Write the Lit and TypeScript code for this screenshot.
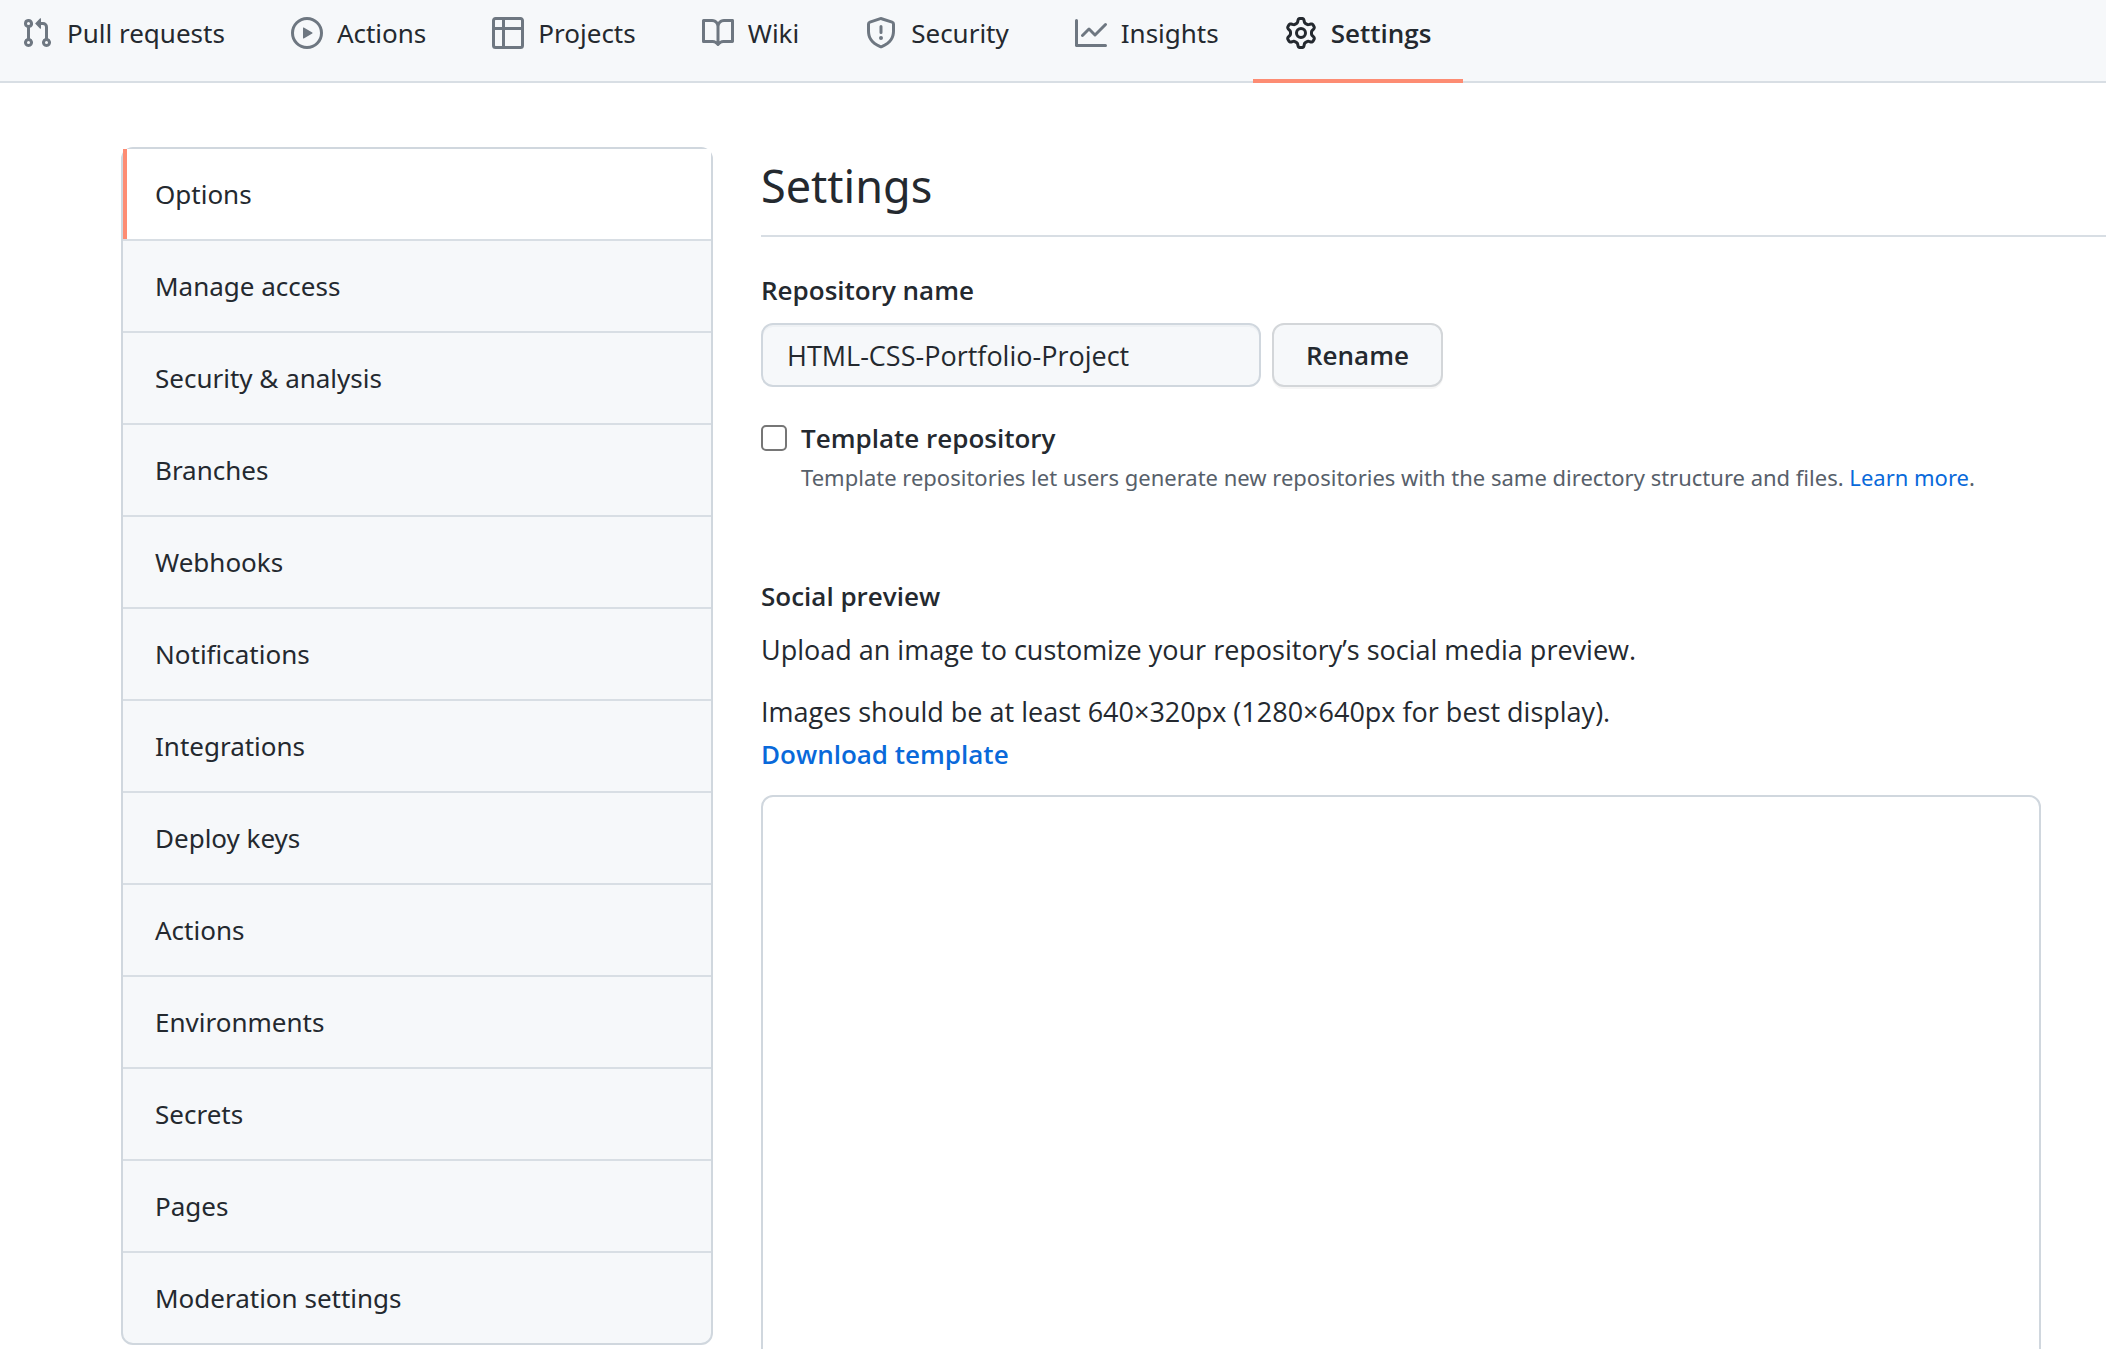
import { LitElement, html, css, svg } from "lit";
import { customElement, property } from "lit/decorators.js";
import { classMap } from "lit/directives/class-map.js";

interface Tab {
  label: string;
  icon: string;
}

const TABS: Tab[] = [
  {
    label: "Pull requests",
    icon: "M7.177 3.073L9.573.677A.25.25 0 0110 .854v4.792a.25.25 0 01-.427.177L7.177 3.427a.25.25 0 010-.354zM3.75 2.5a.75.75 0 100 1.5.75.75 0 000-1.5zm-2.25.75a2.25 2.25 0 113 2.122v5.256a2.251 2.251 0 11-1.5 0V5.372A2.25 2.25 0 011.5 3.25zM11 2.5h-1V4h1a1 1 0 011 1v5.628a2.251 2.251 0 101.5 0V5A2.5 2.5 0 0011 2.5zm1 10.25a.75.75 0 111.5 0 .75.75 0 01-1.5 0zM3.75 12a.75.75 0 100 1.5.75.75 0 000-1.5z",
  },
  {
    label: "Actions",
    icon: "M1.5 8a6.5 6.5 0 1113 0 6.5 6.5 0 01-13 0zM8 0a8 8 0 100 16A8 8 0 008 0zM6.379 5.227A.25.25 0 006 5.442v5.117a.25.25 0 00.379.214l4.264-2.559a.25.25 0 000-.428L6.379 5.227z",
  },
  {
    label: "Projects",
    icon: "M0 1.75C0 .784.784 0 1.75 0h12.5C15.216 0 16 .784 16 1.75v12.5A1.75 1.75 0 0114.25 16H1.75A1.75 1.75 0 010 14.25V1.75zM1.5 6.5v7.75c0 .138.112.25.25.25H5v-8H1.5zM6.5 6.5v8h7.75a.25.25 0 00.25-.25V6.5h-8zm8-1.5V1.75a.25.25 0 00-.25-.25H6.5V5h8zm-13 0H5V1.5H1.75a.25.25 0 00-.25.25V5z",
  },
  {
    label: "Wiki",
    icon: "M0 1.75A.75.75 0 01.75 1h4.253c1.227 0 2.317.59 3 1.501A3.744 3.744 0 0111.006 1h4.245a.75.75 0 01.75.75v10.5a.75.75 0 01-.75.75h-4.507a2.25 2.25 0 00-1.591.659l-.622.621a.75.75 0 01-1.06 0l-.622-.621A2.25 2.25 0 005.258 13H.75a.75.75 0 01-.75-.75V1.75zm8.755 3a2.25 2.25 0 012.25-2.25H14.5v9h-3.757c-.71 0-1.4.201-1.992.572l.004-7.322zm-1.504 7.324l.004-5.073-.002-2.253A2.25 2.25 0 005.003 2.5H1.5v9h3.757a3.75 3.75 0 011.994.574z",
  },
  {
    label: "Security",
    icon: "M7.467.133a1.75 1.75 0 011.066 0l5.25 1.68A1.75 1.75 0 0115 3.48V7c0 1.566-.32 3.182-1.303 4.682-.983 1.498-2.585 2.813-5.032 3.855a1.7 1.7 0 01-1.33 0c-2.447-1.042-4.049-2.357-5.032-3.855C1.32 10.182 1 8.566 1 7V3.48a1.75 1.75 0 011.217-1.667l5.25-1.68zm.61 1.429a.25.25 0 00-.153 0l-5.25 1.68a.25.25 0 00-.174.238V7c0 1.358.275 2.666 1.057 3.86.784 1.194 2.121 2.34 4.366 3.297a.2.2 0 00.154 0c2.245-.956 3.582-2.104 4.366-3.298C13.225 9.666 13.5 8.36 13.5 7V3.48a.25.25 0 00-.174-.237l-5.25-1.68zM9 10.5a1 1 0 11-2 0 1 1 0 012 0zm-.25-5.75a.75.75 0 10-1.5 0v3a.75.75 0 001.5 0v-3z",
  },
  {
    label: "Insights",
    icon: "M1.5 1.75a.75.75 0 00-1.5 0v12.5c0 .414.336.75.75.75h14.5a.75.75 0 000-1.5H1.5V1.75zm14.28 2.53a.75.75 0 00-1.06-1.06L10 7.94 7.53 5.47a.75.75 0 00-1.06 0L3.22 8.72a.75.75 0 001.06 1.06L7 7.06l2.47 2.47a.75.75 0 001.06 0l5.25-5.25z",
  },
  {
    label: "Settings",
    icon: "M7.429 1.525a6.593 6.593 0 011.142 0c.036.003.108.036.137.146l.289 1.105c.147.56.55.967.997 1.189.174.086.341.183.501.29.417.278.97.423 1.53.27l1.102-.303c.11-.03.175.016.195.046.219.31.41.641.573.989.014.031.022.11-.059.19l-.815.806c-.411.406-.562.957-.53 1.456a4.588 4.588 0 010 .582c-.032.499.119 1.05.53 1.456l.815.806c.08.08.073.159.059.19a6.494 6.494 0 01-.573.99c-.02.029-.086.074-.195.045l-1.103-.303c-.559-.153-1.112-.008-1.529.27-.16.107-.327.204-.5.29-.449.222-.851.628-.998 1.189l-.289 1.105c-.029.11-.101.143-.137.146a6.613 6.613 0 01-1.142 0c-.036-.003-.108-.037-.137-.146l-.289-1.105c-.147-.56-.55-.967-.997-1.189a4.502 4.502 0 01-.501-.29c-.417-.278-.97-.423-1.53-.27l-1.102.303c-.11.03-.175-.016-.195-.046a6.492 6.492 0 01-.573-.989c-.014-.031-.022-.11.059-.19l.815-.806c.411-.406.562-.957.53-1.456a4.587 4.587 0 010-.582c.032-.499-.119-1.05-.53-1.456l-.815-.806c-.08-.08-.073-.159-.059-.19a6.44 6.44 0 01.573-.99c.02-.029.086-.075.195-.045l1.103.303c.559.153 1.112.008 1.529-.27.16-.107.327-.204.5-.29.449-.222.851-.628.998-1.189l.289-1.105c.029-.11.101-.143.137-.146zM8 0c-.236 0-.47.01-.701.03-.743.065-1.29.615-1.458 1.261l-.29 1.106c-.017.066-.078.158-.211.224a5.994 5.994 0 00-.668.386c-.123.082-.233.09-.3.071L3.27 2.776c-.644-.177-1.392.02-1.82.63a7.977 7.977 0 00-.704 1.217c-.315.675-.111 1.422.363 1.891l.815.806c.05.048.098.147.088.294a6.084 6.084 0 000 .772c.01.147-.038.246-.088.294l-.815.806c-.474.469-.678 1.216-.363 1.891.2.428.436.835.704 1.218.428.609 1.176.806 1.82.63l1.103-.303c.066-.019.176-.011.299.071.213.143.436.272.668.386.133.066.194.158.212.224l.289 1.106c.169.646.715 1.196 1.458 1.26a8.094 8.094 0 001.402 0c.743-.064 1.29-.614 1.458-1.26l.29-1.106c.017-.066.078-.158.211-.224a5.98 5.98 0 00.668-.386c.123-.082.233-.09.3-.071l1.102.302c.644.177 1.392-.02 1.82-.63.268-.382.505-.789.704-1.217.315-.675.111-1.422-.364-1.891l-.814-.806c-.05-.048-.098-.147-.088-.294a6.1 6.1 0 000-.772c-.01-.147.039-.246.088-.294l.814-.806c.475-.469.679-1.216.364-1.891a7.992 7.992 0 00-.704-1.218c-.428-.609-1.176-.806-1.82-.63l-1.103.303c-.066.019-.176.011-.299-.071a5.991 5.991 0 00-.668-.386c-.133-.066-.194-.158-.212-.224L10.16 1.29C9.99.645 9.444.095 8.701.031A8.094 8.094 0 008 0zm1.5 8a1.5 1.5 0 11-3 0 1.5 1.5 0 013 0zM11 8a3 3 0 11-6 0 3 3 0 016 0z",
  },
];

const MENU = [
  "Options",
  "Manage access",
  "Security & analysis",
  "Branches",
  "Webhooks",
  "Notifications",
  "Integrations",
  "Deploy keys",
  "Actions",
  "Environments",
  "Secrets",
  "Pages",
  "Moderation settings",
];

@customElement("repo-tabs")
class RepoTabs extends LitElement {
  @property() current = "";

  static styles = css`
    :host {
      display: block;
      background: #f6f8fa;
      border-bottom: 2px solid #d8dee4;
    }
    .tabs {
      display: flex;
      padding-left: 21px;
      gap: 66px;
    }
    .tab {
      display: flex;
      align-items: center;
      gap: 14px;
      padding: 12px 0 27px;
      color: #24292f;
      text-decoration: none;
      white-space: nowrap;
    }
    .current {
      font-family: "Open Sans", sans-serif;
      font-weight: 600;
      margin: 0 -32px -2px;
      padding: 12px 32px 25px;
      border-bottom: 4px solid #fd8c73;
    }
    .icon {
      width: 32px;
      height: 32px;
      flex: none;
      fill: #6e7781;
    }
    .current .icon {
      fill: #24292f;
    }
  `;

  render() {
    return html`<nav class="tabs" aria-label="Repository">
      ${TABS.map((tab) => {
        const current = tab.label === this.current;
        return html`<a class=${classMap({ tab: true, current })} href="#">
          <svg class="icon" viewBox="0 0 16 16" aria-hidden="true">
            ${svg`<path fill-rule="evenodd" d=${tab.icon}></path>`}
          </svg>
          <span>${tab.label}</span>
        </a>`;
      })}
    </nav>`;
  }
}

@customElement("settings-menu")
class SettingsMenu extends LitElement {
  @property() current = "";

  static styles = css`
    :host {
      display: block;
    }
    .menu {
      border: 2px solid #d0d7de;
      border-radius: 12px;
      background: #f6f8fa;
    }
    .item {
      display: block;
      padding: 24px 32px;
      color: #24292f;
      text-decoration: none;
      border-bottom: 2px solid #d8dee4;
    }
    .item:last-child {
      border-bottom: 0;
    }
    .current {
      background: linear-gradient(90deg, #fd8c73 4px, #ffffff 4px);
    }
  `;

  render() {
    return html`<nav class="menu" aria-label="Settings sections">
      ${MENU.map(
        (label) =>
          html`<a
            class=${classMap({ item: true, current: label === this.current })}
            href="#"
            >${label}</a
          >`
      )}
    </nav>`;
  }
}

@customElement("app-root")
class AppRoot extends LitElement {
  static styles = css`
    :host {
      display: block;
      height: 100vh;
      overflow: hidden;
      background: #ffffff;
      color: #24292f;
      font-family: "Noto Sans", "Open Sans", sans-serif;
      font-size: 26px;
      line-height: 42px;
    }
    .page {
      display: grid;
      grid-template-columns: 592px minmax(0, 1fr);
      align-items: start;
      gap: 48px;
      padding: 64px 0 0 121px;
    }
    .title {
      margin: 0 0 32px;
      padding: 3px 0 13px;
      border-bottom: 2px solid #d8dee4;
      font-size: 45px;
      font-weight: 400;
      line-height: 72px;
    }
    .label,
    .subtitle,
    .strong,
    .button {
      font-family: "Open Sans", sans-serif;
      font-size: 26px;
      font-weight: 600;
    }
    .text,
    .field {
      font-family: "Open Sans", sans-serif;
      font-size: 27px;
    }
    .label {
      display: block;
    }
    .rename {
      display: flex;
      gap: 11px;
      margin: 12px 0 30px;
    }
    .field,
    .button {
      box-sizing: border-box;
      height: 64px;
      border-radius: 12px;
      background: #f6f8fa;
      color: inherit;
    }
    .field {
      width: 500px;
      padding: 0 24px;
      border: 2px solid #d0d7de;
      box-shadow: inset 0 2px 0 rgba(208, 215, 222, 0.2);
    }
    .button {
      padding: 0 32px;
      border: 2px solid #d3d6d9;
      box-shadow: 0 2px 0 rgba(27, 31, 36, 0.04);
    }
    .template {
      display: grid;
      grid-template-columns: 26px minmax(0, 1fr);
      column-gap: 14px;
      margin-bottom: 80px;
    }
    .check {
      appearance: none;
      box-sizing: border-box;
      width: 26px;
      height: 26px;
      margin: 8px 0 0;
      border: 2px solid #767676;
      border-radius: 5px;
      background: #ffffff;
    }
    .note {
      grid-column: 2;
      margin: 0;
      color: #57606a;
      font-size: 22px;
      line-height: 36px;
    }
    .link {
      color: #0969da;
      text-decoration: none;
    }
    .subtitle {
      margin: 0 0 12px;
    }
    .text {
      margin: 0 0 20px;
    }
    .preview {
      box-sizing: border-box;
      width: 100%;
      max-width: 1280px;
      aspect-ratio: 2 / 1;
      border: 2px solid #d0d7de;
      border-radius: 12px;
    }
  `;

  render() {
    return html`
      <repo-tabs current="Settings"></repo-tabs>
      <div class="page">
        <settings-menu current="Options"></settings-menu>
        <main>
          <h2 class="title">Settings</h2>
          <label class="label" for="name">Repository name</label>
          <div class="rename">
            <input class="field" id="name" type="text" .value=${"HTML-CSS-Portfolio-Project"} />
            <button class="button" type="button">Rename</button>
          </div>
          <div class="template">
            <input class="check" id="template" type="checkbox" />
            <label class="label" for="template">Template repository</label>
            <p class="note">
              Template repositories let users generate new repositories with the same directory
              structure and files. <a class="link" href="#">Learn more</a>.
            </p>
          </div>
          <h3 class="subtitle">Social preview</h3>
          <p class="text">Upload an image to customize your repository’s social media preview.</p>
          <p class="text">
            Images should be at least 640×320px (1280×640px for best display).<br />
            <a class="link strong" href="#">Download template</a>
          </p>
          <div class="preview"></div>
        </main>
      </div>
    `;
  }
}
